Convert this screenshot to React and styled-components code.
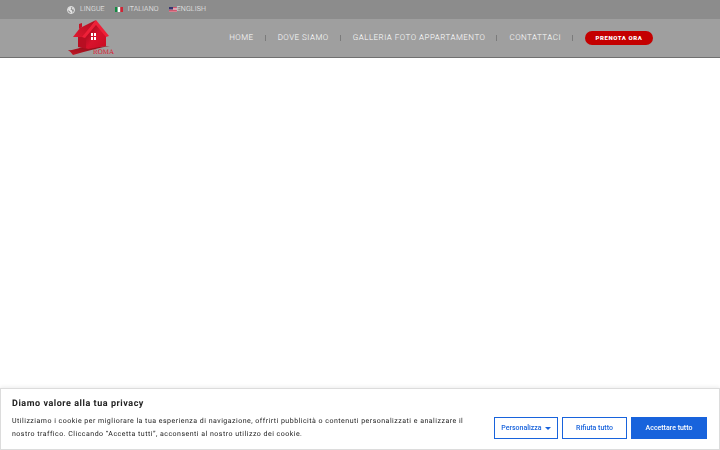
import React from "react";
import styled, { createGlobalStyle } from "styled-components";

const GlobalStyle = createGlobalStyle`
  *, *::before, *::after { box-sizing: border-box; }
  body {
    margin: 0;
    background: #fff;
    font-family: Roboto, "Liberation Sans", sans-serif;
    text-rendering: geometricPrecision;
  }
`;

const Header = styled.header`
  border-bottom: 1px solid #707070;
  background: #9f9f9f;
`;

const TopBar = styled.div`
  background: #8c8c8c;
`;

const Container = styled.div`
  display: flex;
  align-items: center;
  justify-content: space-between;
  max-width: 586px;
  min-height: ${(p) => p.$height}px;
  margin: 0 auto;
`;

const Languages = styled.nav`
  display: flex;
  align-items: center;
  gap: 10px;
`;

const LanguageLink = styled.a`
  display: flex;
  align-items: center;
  gap: ${(p) => p.$gap}px;
  color: #f4f4f4;
  font-size: 7px;
  font-weight: 300;
  line-height: 13px;
  letter-spacing: 0.02em;
  text-decoration: none;
  text-transform: uppercase;
`;

const LogoLink = styled.a`
  display: block;
  line-height: 0;
`;

const MainNav = styled.nav`
  display: flex;
  align-items: center;
`;

const NavLink = styled.a`
  color: #fff;
  font-size: 8px;
  font-weight: 300;
  line-height: 12px;
  letter-spacing: 0.06em;
  text-decoration: none;
  text-transform: uppercase;
`;

const Divider = styled.span`
  width: 1px;
  height: 6px;
  margin: 0 12px 0 11px;
  background: #7b7b7b;
`;

const BookButton = styled.button`
  min-width: 68px;
  height: 14px;
  padding: 0 10px;
  border: 0;
  border-radius: 7px;
  background: #c40000;
  color: #fff;
  font-family: inherit;
  font-size: 6px;
  font-weight: 900;
  line-height: 14px;
  letter-spacing: 0.1em;
  text-transform: uppercase;
`;

const Consent = styled.section`
  position: fixed;
  right: 0;
  bottom: 0;
  left: 0;
  display: flex;
  align-items: flex-end;
  justify-content: space-between;
  gap: 24px;
  padding: 8px 12px 8px 11px;
  border: 1px solid #dcdcdc;
  background: #fff;
  box-shadow: 0 -1px 4px rgba(0, 0, 0, 0.08);
`;

const ConsentText = styled.div`
  flex: 1;
  color: #212121;
`;

const ConsentTitle = styled.h2`
  margin: 0 0 4px;
  font-size: 9px;
  font-weight: 700;
  line-height: 14px;
  letter-spacing: 0.06em;
`;

const ConsentBody = styled.p`
  margin: 0;
  font-size: 7px;
  line-height: 13px;
  letter-spacing: 0.07em;
`;

const ConsentActions = styled.div`
  display: flex;
  gap: 4px;
  padding-bottom: 2px;
`;

const ConsentButton = styled.button`
  display: flex;
  align-items: center;
  justify-content: center;
  gap: 3px;
  width: ${(p) => p.$width}px;
  height: 22px;
  padding: 0;
  border: 1px solid #1863dc;
  background: ${(p) => (p.$filled ? "#1863dc" : "#fff")};
  color: ${(p) => (p.$filled ? "#fff" : "#1863dc")};
  font-family: inherit;
  font-size: 7px;
  font-weight: 500;
  line-height: 12px;
  white-space: nowrap;
`;

const Caret = styled.span`
  border: 3px solid transparent;
  border-top-color: currentColor;
  border-bottom: 0;
`;

function GlobeIcon() {
  return (
    <svg width="8" height="8" viewBox="0 0 16 16" aria-hidden="true">
      <circle cx="8" cy="8" r="7" fill="#8c8c8c" stroke="#e4e4e4" strokeWidth="2" />
      <path d="M3 3l4-1 2 2-2 3 3 2 1 3-2 3-3-4-4-3zM11 2l3 4-2 2-2-3z" fill="#e4e4e4" />
    </svg>
  );
}

function ItalyFlag() {
  return (
    <svg width="8" height="5" viewBox="0 0 9 6" preserveAspectRatio="none" aria-hidden="true">
      <path fill="#128a42" d="M0 0h3v6H0z" />
      <path fill="#fff" d="M3 0h3v6H3z" />
      <path fill="#cf2435" d="M6 0h3v6H6z" />
    </svg>
  );
}

function UsaFlag() {
  return (
    <svg width="8" height="5" viewBox="0 0 16 10" aria-hidden="true">
      <path fill="#eee" d="M0 0h16v10H0z" />
      <path stroke="#c32643" strokeWidth="1.5" d="M0 1h16M0 4h16M0 7h16M0 9.5h16" />
      <path fill="#35366f" d="M0 0h8v5H0z" />
    </svg>
  );
}

function Logo() {
  return (
    <svg width="50" height="36" viewBox="0 0 50 36" role="img" aria-label="Roma">
      <defs>
        <linearGradient id="front" x1="0" y1="0" x2="1" y2="1">
          <stop offset="0" stopColor="#8f0818" />
          <stop offset="0.5" stopColor="#d8122c" />
          <stop offset="1" stopColor="#c90b23" />
        </linearGradient>
        <linearGradient id="roof" x1="0" y1="1" x2="1" y2="0">
          <stop offset="0" stopColor="#e0182f" />
          <stop offset="1" stopColor="#b00d20" />
        </linearGradient>
        <linearGradient id="path" x1="0" y1="1" x2="1" y2="0">
          <stop offset="0" stopColor="#c31826" />
          <stop offset="1" stopColor="#810916" />
        </linearGradient>
      </defs>
      <path d="M1 30C8 31 13 26 24 27L43 26Q30 28 6 35Q4 32 1 30z" fill="url(#path)" />
      <path d="M11 17L20 14V29L11 27z" fill="#b80e22" />
      <path d="M19 15L29 4L39 15V26L21 29L19 28z" fill="url(#front)" />
      <path d="M6 17L13 8L29 0L17 17z" fill="url(#roof)" />
      <path d="M29 0L42 16L39 17L29 5L18 18L15 17z" fill="#ee2038" />
      <path d="M12 4l3-1v4l-3 2z" fill="#c51427" />
      <path d="M24 13h2v3h-2zM27 13h2v3h-2zM24 17h2v3h-2zM27 17h2v3h-2z" fill="#fff" />
      <text x="26" y="34" fill="#dd1830" fontFamily="Liberation Serif, serif" fontSize="7">ROMA</text>
    </svg>
  );
}

const navItems = ["Home", "Dove siamo", "Galleria foto appartamento", "Contattaci"];

export default function App() {
  return (
    <>
      <GlobalStyle />
      <Header>
        <TopBar>
          <Container $height={19}>
            <Languages aria-label="Lingue">
              <LanguageLink href="#lingue" $gap={5}><GlobeIcon />Lingue</LanguageLink>
              <LanguageLink href="#it" $gap={5}><ItalyFlag />Italiano</LanguageLink>
              <LanguageLink href="#en" $gap={0}><UsaFlag />English</LanguageLink>
            </Languages>
          </Container>
        </TopBar>
        <Container $height={38}>
          <LogoLink href="#home"><Logo /></LogoLink>
          <MainNav aria-label="Menu">
            {navItems.map((item) => (
              <React.Fragment key={item}>
                <NavLink href="#menu">{item}</NavLink>
                <Divider />
              </React.Fragment>
            ))}
            <BookButton type="button">Prenota ora</BookButton>
          </MainNav>
        </Container>
      </Header>
      <Consent aria-labelledby="consent-title">
        <ConsentText>
          <ConsentTitle id="consent-title">Diamo valore alla tua privacy</ConsentTitle>
          <ConsentBody>
            Utilizziamo i cookie per migliorare la tua esperienza di navigazione, offrirti pubblicità o contenuti
            personalizzati e analizzare il nostro traffico. Cliccando “Accetta tutti”, acconsenti al nostro utilizzo
            dei cookie.
          </ConsentBody>
        </ConsentText>
        <ConsentActions>
          <ConsentButton type="button" $width={64}>Personalizza<Caret /></ConsentButton>
          <ConsentButton type="button" $width={65}>Rifiuta tutto</ConsentButton>
          <ConsentButton type="button" $width={76} $filled>Accettare tutto</ConsentButton>
        </ConsentActions>
      </Consent>
    </>
  );
}
